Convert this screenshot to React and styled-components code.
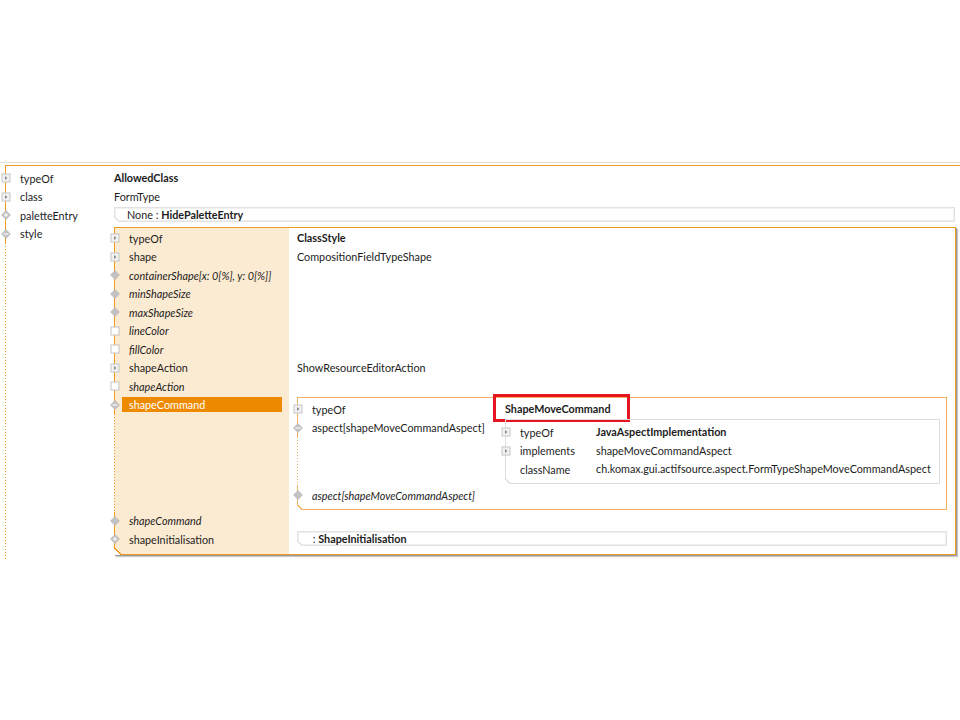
import React from 'react';
import styled, { createGlobalStyle, css } from 'styled-components';

const ORANGE = '#f09a22';
const ORANGE_SOFT = '#f2b063';
const GREY = '#dddddd';
const PEACH = '#fcebd3';
const SELECT = '#ee8a00';
const TEXT = '#1c1c1c';
const ROW_H = 18.5;

const GlobalStyle = createGlobalStyle`
  body {
    margin: 0;
    background: #fff;
    font-family: Lato, "Open Sans", sans-serif;
    font-size: 10.8px;
    color: ${TEXT};
  }
`;

const Page = styled.div`
  width: 960px;
  box-sizing: border-box;
  padding: 162px 0 0 5px;
`;

const TopRule = styled.div`
  height: 1px;
  margin: 0 0 2px -5px;
  background: #dedede;
`;

const Frame = styled.div`
  border-top: 1px solid ${ORANGE};
`;

const cutCorner = (color, size, left) => css`
  &::after {
    content: '';
    position: absolute;
    left: ${left}px;
    bottom: -1px;
    width: ${size}px;
    height: ${size}px;
    background: linear-gradient(45deg, #fff calc(50% - 1px), ${color} calc(50% - 1px), ${color} calc(50% + 0.5px), transparent calc(50% + 0.5px));
  }
`;

// a tree box: the left edge is drawn by its rows (tree line)
const Box = styled.div`
  position: relative;
  border: 1px solid ${p => p.$border};
  border-left: none;
  margin: ${p => p.$margin};
  ${p => p.$shadow && css`box-shadow: 1px 1px 0 #9a9a9a, 2px 2px 1px #c8c8c8;`}
  ${p => cutCorner(p.$border, p.$cut, 0)}
`;

const Cap = styled.div`
  width: ${p => p.$w}px;
  height: ${p => p.$h}px;
  box-sizing: border-box;
  border-left: 1px solid ${p => p.$line};
  background: ${p => p.$shade || 'transparent'};
`;

const RowWrap = styled.div`
  display: flex;
  align-items: stretch;
`;

const LabelCell = styled.div`
  flex: 0 0 ${p => p.$w}px;
  min-width: 0;
  display: flex;
  flex-direction: column;
  background: ${p => p.$shade || 'transparent'};
`;

const LabelLine = styled.div`
  height: ${ROW_H}px;
  display: flex;
  align-items: center;
  border-left: 1px solid ${p => p.$line};
`;

const Dots = styled.div`
  flex: 1;
  background-image: linear-gradient(${p => p.$line} 1px, transparent 1px);
  background-size: 1px 3px;
  background-repeat: repeat-y;
`;

const Label = styled.span`
  flex: 1;
  min-width: 0;
  height: 15px;
  line-height: 15px;
  margin: 0 7px 0 2px;
  padding: 0 7px;
  white-space: nowrap;
  font-style: ${p => (p.$italic ? 'italic' : 'normal')};
  ${p => p.$selected && css`
    background: ${SELECT};
    color: #fff;
  `}
`;

const ValueCell = styled.div`
  flex: 1;
  min-width: 0;
  display: flex;
  flex-direction: column;
  padding: 0 ${p => p.$padR}px 0 ${p => p.$padL}px;
`;

const ValueText = styled.div`
  height: ${ROW_H}px;
  line-height: ${ROW_H}px;
  white-space: nowrap;
  font-weight: ${p => (p.$bold ? 700 : 400)};
`;

const Marked = styled.span`
  display: inline-block;
  box-sizing: border-box;
  width: 131px;
  height: 22px;
  margin: -4px 0 0 -9px;
  padding: 3.5px 0 0 9px;
  line-height: ${ROW_H}px;
  font-weight: 700;
  box-shadow: 0 0 0 3px #e5161f;
`;

const FieldBox = styled.div`
  position: relative;
  height: 15px;
  box-sizing: border-box;
  margin: 1px ${p => p.$mr || 0}px 0 0;
  padding-left: 12px;
  border: 1px solid #e2e2e2;
  box-shadow: inset 0 0 0 1px #f1f1f1;
  line-height: 13px;
  white-space: nowrap;
  ${cutCorner('#e2e2e2', 6, -1)}
`;

const Svg = styled.svg`
  flex: 0 0 10px;
  margin-left: -5px;
  display: block;
`;

function Icon({ kind }) {
  if (!kind) return <Svg width="10" height="10" viewBox="0 0 10 10" />;
  const diamond = <path d="M5 0.5L9.5 5L5 9.5L0.5 5Z" fill="#c2c2c2" stroke="#b4b4b4" strokeWidth="0.6" />;
  return (
    <Svg width="10" height="10" viewBox="0 0 10 10">
      {kind === 'expand' && (
        <>
          <rect x="1" y="1" width="8" height="8" fill="#f2f2f2" stroke="#c6c6c6" />
          <path d="M4 3L6.5 5L4 7Z" fill="#8c8c8c" />
        </>
      )}
      {kind === 'box' && <rect x="1" y="1" width="8" height="8" fill="#fff" stroke="#c4c4c4" />}
      {kind === 'diamond' && diamond}
      {kind === 'minus' && (
        <>
          {diamond}
          <path d="M2.5 5H7.5" stroke="#f4f4f4" strokeWidth="1.3" />
        </>
      )}
      {kind === 'open' && (
        <>
          {diamond}
          <circle cx="5" cy="5" r="1.7" fill="#f4f4f4" />
        </>
      )}
    </Svg>
  );
}

function Tree({ cfg, rows }) {
  return (
    <>
      {cfg.top > 0 && <Cap $w={cfg.w} $h={cfg.top} $line={cfg.line} $shade={cfg.shade} />}
      {rows.map((r, i) => (
        <RowWrap key={i}>
          <LabelCell $w={cfg.w} $shade={cfg.shade}>
            <LabelLine $line={cfg.line}>
              <Icon kind={r.icon} />
              <Label $italic={r.italic} $selected={r.selected}>{r.label}</Label>
            </LabelLine>
            {r.open && <Dots $line={cfg.line} />}
          </LabelCell>
          <ValueCell $padL={cfg.padL} $padR={cfg.padR}>{r.value}</ValueCell>
        </RowWrap>
      ))}
      {cfg.bottom > 0 && <Cap $w={cfg.w} $h={cfg.bottom} $line={cfg.line} $shade={cfg.shade} />}
    </>
  );
}

const outerCfg = { w: 109, line: ORANGE, padL: 0, padR: 4, top: 3, bottom: 0 };
const styleCfg = { w: 175, line: ORANGE, shade: PEACH, padL: 8, padR: 8, top: 1, bottom: 5 };
const commandCfg = { w: 200, line: ORANGE_SOFT, padL: 8, padR: 6, top: 2, bottom: 4 };
const aspectCfg = { w: 83, line: GREY, padL: 8, padR: 4, top: 3, bottom: 4 };

const aspectRows = [
  { label: 'typeOf', icon: 'expand', value: <ValueText $bold>JavaAspectImplementation</ValueText> },
  { label: 'implements', icon: 'expand', value: <ValueText>shapeMoveCommandAspect</ValueText> },
  { label: 'className', value: <ValueText>ch.komax.gui.actifsource.aspect.FormTypeShapeMoveCommandAspect</ValueText> },
];

const commandRows = [
  {
    label: 'typeOf',
    icon: 'expand',
    value: (
      <ValueText>
        <Marked>ShapeMoveCommand</Marked>
      </ValueText>
    ),
  },
  {
    label: 'aspect[shapeMoveCommandAspect]',
    icon: 'minus',
    open: true,
    value: (
      <Box $border={GREY} $cut={6} $margin="0.5px 0 2.5px 0">
        <Tree cfg={aspectCfg} rows={aspectRows} />
      </Box>
    ),
  },
  { label: 'aspect[shapeMoveCommandAspect]', icon: 'diamond', italic: true },
];

const styleRows = [
  { label: 'typeOf', icon: 'expand', value: <ValueText $bold>ClassStyle</ValueText> },
  { label: 'shape', icon: 'expand', value: <ValueText>CompositionFieldTypeShape</ValueText> },
  { label: 'containerShape[x: 0[%], y: 0[%]]', icon: 'diamond', italic: true },
  { label: 'minShapeSize', icon: 'diamond', italic: true },
  { label: 'maxShapeSize', icon: 'diamond', italic: true },
  { label: 'lineColor', icon: 'box', italic: true },
  { label: 'fillColor', icon: 'box', italic: true },
  { label: 'shapeAction', icon: 'expand', value: <ValueText>ShowResourceEditorAction</ValueText> },
  { label: 'shapeAction', icon: 'box', italic: true },
  {
    label: 'shapeCommand',
    icon: 'minus',
    selected: true,
    open: true,
    value: (
      <Box $border={ORANGE_SOFT} $cut={6} $margin="1.5px 0 2px 0">
        <Tree cfg={commandCfg} rows={commandRows} />
      </Box>
    ),
  },
  { label: 'shapeCommand', icon: 'diamond', italic: true },
  {
    label: 'shapeInitialisation',
    icon: 'open',
    value: (
      <FieldBox>
        &nbsp;: <b>ShapeInitialisation</b>
      </FieldBox>
    ),
  },
];

const outerRows = [
  { label: 'typeOf', icon: 'expand', value: <ValueText $bold>AllowedClass</ValueText> },
  { label: 'class', icon: 'expand', value: <ValueText>FormType</ValueText> },
  {
    label: 'paletteEntry',
    icon: 'open',
    value: (
      <FieldBox $mr={1}>
        None : <b>HidePaletteEntry</b>
      </FieldBox>
    ),
  },
  {
    label: 'style',
    icon: 'minus',
    open: true,
    value: (
      <Box $border={ORANGE} $cut={8} $shadow $margin="2.5px 0 6px 0">
        <Tree cfg={styleCfg} rows={styleRows} />
      </Box>
    ),
  },
];

export default function App() {
  return (
    <Page>
      <GlobalStyle />
      <TopRule />
      <Frame>
        <Tree cfg={outerCfg} rows={outerRows} />
      </Frame>
    </Page>
  );
}
